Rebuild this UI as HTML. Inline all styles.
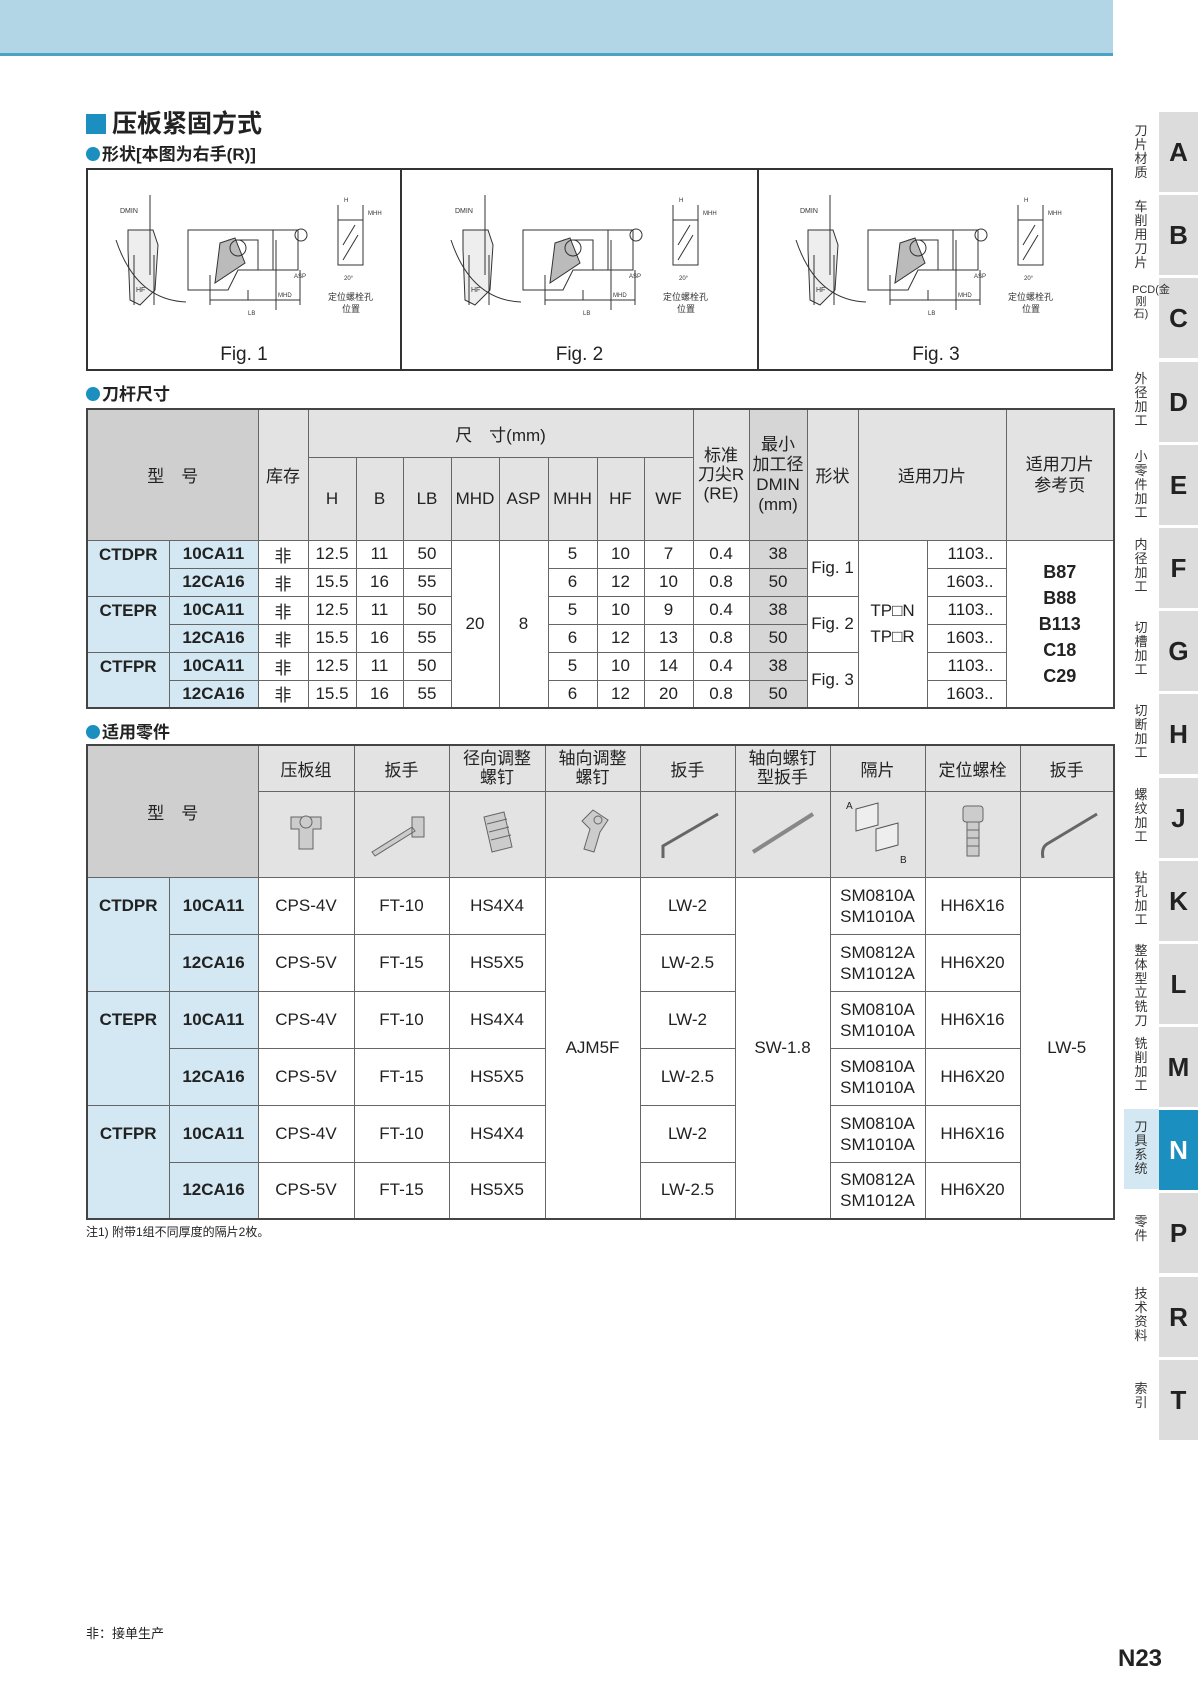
<!DOCTYPE html>
<html><head><meta charset="utf-8">
<style>
*{margin:0;padding:0;box-sizing:border-box}
body{width:1200px;height:1697px;background:#fff;position:relative;overflow:hidden;font-family:"Liberation Sans","Noto Sans CJK SC",sans-serif;color:#222}
.hdr{position:absolute;left:0;top:0;width:1113px;height:56px;background:#b3d6e6;border-bottom:3px solid #4aa3c4}
.title{position:absolute;left:86px;top:104px;font-size:25px;font-weight:bold;color:#222}
.title span{display:inline-block;width:20px;height:20px;background:#1b8fc0;margin-right:6px;vertical-align:-2px}
.sub{position:absolute;left:86px;font-size:17px;font-weight:bold;color:#222}
.sub:before{content:"";display:inline-block;width:14px;height:14px;border-radius:50%;background:#1b8fc0;vertical-align:-1px;margin-right:2px}
.figbox{position:absolute;left:86px;top:168px;width:1027px;height:203px;border:2px solid #333}
.figbox .d{position:absolute;top:0;bottom:0;width:2px;background:#333}
.figlbl{position:absolute;top:174px;font-size:19px;color:#222;text-align:center}
table{border-collapse:collapse;position:absolute;left:86px;table-layout:fixed;border:2px solid #444}
td{border:1px solid #666;text-align:center;font-size:17px;padding:0;overflow:hidden;white-space:nowrap}
.h{background:#e3e3e3}
.hm{background:#cfcfcf}
.m{background:#d3e8f3;font-weight:bold}
.dm{background:#d6d6d6}
.tab{position:absolute;left:1159px;width:39px;height:80px;background:#dcdcdc;font-weight:bold;font-size:26px;color:#222;text-align:center;line-height:80px}
.vt{position:absolute;left:1132px;width:18px;font-size:13px;line-height:14px;color:#333;text-align:center}
</style></head><body>
<div class="hdr"></div>
<div class="title"><span></span>压板紧固方式</div>
<div class="sub" style="top:140px">形状[本图为右手(R)]</div>
<div class="figbox">
<div class="d" style="left:312px"></div><div class="d" style="left:669px"></div>
<svg width="1023" height="199" style="position:absolute;left:0;top:0" stroke="#333" fill="none" stroke-width="1">
<g id="f1" transform="translate(10,10)">
<path d="M30 50 l25 0 l5 15 l-3 45 l-15 15 l-10 -5 l-2 -50z" fill="#eee"/>
<path d="M18 60 q20 60 70 62"/><path d="M52 15 l0 80 M36 75 l0 50 M56 75 l0 50"/>
<text x="22" y="33" font-size="7" fill="#333" stroke="none">DMIN</text>
<text x="38" y="112" font-size="7" fill="#333" stroke="none">HF</text>
<path d="M90 50 h110 v40 h-60 l-10 20 h-40 z M130 60 h30 v30 M175 50 v40"/>
<path d="M122 63 l15 -5 l10 25 l-30 20 z" fill="#bbb"/><circle cx="140" cy="68" r="8"/>
<circle cx="203" cy="55" r="6"/>
<path d="M112 120 h90 M112 95 v30 M202 90 v35 M150 110 v10 M178 60 v70"/>
<text x="150" y="135" font-size="6" fill="#333" stroke="none">LB</text>
<text x="180" y="117" font-size="6" fill="#333" stroke="none">MHD</text>
<text x="196" y="98" font-size="6" fill="#333" stroke="none">ASP</text>
<path d="M240 40 h25 v45 h-25 z M240 25 v15 M265 25 v15 M245 65 l12 -20 M245 80 l15 -25"/>
<text x="246" y="22" font-size="6" fill="#333" stroke="none">H</text>
<text x="270" y="35" font-size="6" fill="#333" stroke="none">MHH</text>
<text x="246" y="100" font-size="6" fill="#333" stroke="none">20°</text>
<text x="230" y="120" font-size="9" fill="#333" stroke="none">定位螺栓孔</text>
<text x="244" y="132" font-size="9" fill="#333" stroke="none">位置</text>
</g>
<use href="#f1" x="335"/><use href="#f1" x="680"/>
</svg>
<div class="figlbl" style="left:0;width:312px">Fig. 1</div>
<div class="figlbl" style="left:314px;width:355px">Fig. 2</div>
<div class="figlbl" style="left:671px;width:354px">Fig. 3</div>
</div>
<div class="sub" style="top:380px">刀杆尺寸</div>

<table style="top:408px;width:1027px">
<colgroup><col style="width:82px"><col style="width:89px"><col style="width:50px"><col style="width:48px"><col style="width:47px"><col style="width:48px"><col style="width:48px"><col style="width:49px"><col style="width:49px"><col style="width:47px"><col style="width:49px"><col style="width:56px"><col style="width:58px"><col style="width:51px"><col style="width:69px"><col style="width:79px"><col style="width:108px"></colgroup>
<tr style="height:48px"><td class="hm" colspan="2" rowspan="2">型　号</td><td class="h" rowspan="2">库存</td><td class="h" colspan="8">尺　寸(mm)</td><td class="h" rowspan="2" style="line-height:19px">标准<br>刀尖R<br>(RE)</td><td class="dm" rowspan="2" style="line-height:20px">最小<br>加工径<br>DMIN<br>(mm)</td><td class="h" rowspan="2">形状</td><td class="h" colspan="2" rowspan="2">适用刀片</td><td class="h" rowspan="2" style="line-height:21px">适用刀片<br>参考页</td></tr>
<tr style="height:83px"><td class="h">H</td><td class="h">B</td><td class="h">LB</td><td class="h">MHD</td><td class="h">ASP</td><td class="h">MHH</td><td class="h">HF</td><td class="h">WF</td></tr>
<tr style="height:28px"><td class="m" rowspan="2" style="vertical-align:top;padding-top:4px;border-bottom-color:#666">CTDPR</td><td class="m">10CA11</td><td>非</td><td>12.5</td><td>11</td><td>50</td><td rowspan="6">20</td><td rowspan="6">8</td><td>5</td><td>10</td><td>7</td><td>0.4</td><td class="dm">38</td><td rowspan="2">Fig. 1</td><td rowspan="6" style="line-height:26px">TP□N<br>TP□R</td><td style="text-align:right;padding-right:12px">1103..</td><td rowspan="6" style="font-weight:bold;font-size:18px;line-height:26px">B87<br>B88<br>B113<br>C18<br>C29</td></tr>
<tr style="height:28px"><td class="m">12CA16</td><td>非</td><td>15.5</td><td>16</td><td>55</td><td>6</td><td>12</td><td>10</td><td>0.8</td><td class="dm">50</td><td style="text-align:right;padding-right:12px">1603..</td></tr>
<tr style="height:28px"><td class="m" rowspan="2" style="vertical-align:top;padding-top:4px">CTEPR</td><td class="m">10CA11</td><td>非</td><td>12.5</td><td>11</td><td>50</td><td>5</td><td>10</td><td>9</td><td>0.4</td><td class="dm">38</td><td rowspan="2">Fig. 2</td><td style="text-align:right;padding-right:12px">1103..</td></tr>
<tr style="height:28px"><td class="m">12CA16</td><td>非</td><td>15.5</td><td>16</td><td>55</td><td>6</td><td>12</td><td>13</td><td>0.8</td><td class="dm">50</td><td style="text-align:right;padding-right:12px">1603..</td></tr>
<tr style="height:28px"><td class="m" rowspan="2" style="vertical-align:top;padding-top:4px">CTFPR</td><td class="m">10CA11</td><td>非</td><td>12.5</td><td>11</td><td>50</td><td>5</td><td>10</td><td>14</td><td>0.4</td><td class="dm">38</td><td rowspan="2">Fig. 3</td><td style="text-align:right;padding-right:12px">1103..</td></tr>
<tr style="height:28px"><td class="m">12CA16</td><td>非</td><td>15.5</td><td>16</td><td>55</td><td>6</td><td>12</td><td>20</td><td>0.8</td><td class="dm">50</td><td style="text-align:right;padding-right:12px">1603..</td></tr>
</table>

<div class="sub" style="top:718px">适用零件</div>
<table style="top:744px;width:1027px">
<colgroup><col style="width:82px"><col style="width:89px"><col style="width:96px"><col style="width:95px"><col style="width:96px"><col style="width:95px"><col style="width:95px"><col style="width:95px"><col style="width:95px"><col style="width:95px"><col style="width:94px"></colgroup>
<tr style="height:46px"><td class="hm" colspan="2" rowspan="2">型　号</td><td class="h">压板组</td><td class="h">扳手</td><td class="h" style="line-height:19px">径向调整<br>螺钉</td><td class="h" style="line-height:19px">轴向调整<br>螺钉</td><td class="h">扳手</td><td class="h" style="line-height:19px">轴向螺钉<br>型扳手</td><td class="h">隔片</td><td class="h">定位螺栓</td><td class="h">扳手</td></tr>
<tr style="height:86px">
<td class="h"><svg width="50" height="60" fill="#ccc" stroke="#666"><path d="M10 15 h30 v12 h-8 v20 h-14 v-20 h-8z"/><circle cx="25" cy="20" r="6"/></svg></td>
<td class="h"><svg width="70" height="60" fill="#ccc" stroke="#666"><path d="M5 50 l40 -25 l3 4 l-40 25z M45 15 h12 v20 h-12z"/></svg></td>
<td class="h"><svg width="50" height="60" fill="#ccc" stroke="#666"><path d="M12 15 l20 -5 l8 35 l-20 5z M15 22 l20 -5 M17 30 l20 -5 M19 38 l20 -5"/></svg></td>
<td class="h"><svg width="50" height="60" fill="#ccc" stroke="#666"><path d="M25 8 l15 10 l-8 12 l-6 20 l-10 -3 l6 -20 l-8 -8z"/><circle cx="30" cy="18" r="4"/></svg></td>
<td class="h"><svg width="80" height="60" fill="none" stroke="#666" stroke-width="3"><path d="M70 12 l-55 32 l0 12"/></svg></td>
<td class="h"><svg width="80" height="60" fill="none" stroke="#888" stroke-width="4"><path d="M10 50 l60 -38"/></svg></td>
<td class="h"><svg width="80" height="70" fill="#eee" stroke="#555"><path d="M18 12 l22 -6 v22 l-22 6z M38 32 l22 -6 v22 l-22 6z"/><text x="8" y="12" font-size="10" fill="#222" stroke="none">A</text><text x="62" y="66" font-size="10" fill="#222" stroke="none">B</text></svg></td>
<td class="h"><svg width="40" height="64" fill="#ccc" stroke="#666"><rect x="10" y="6" width="20" height="16" rx="3"/><path d="M14 22 h12 v34 h-12z M14 30 h12 M14 38 h12 M14 46 h12"/></svg></td>
<td class="h"><svg width="80" height="60" fill="none" stroke="#666" stroke-width="3"><path d="M70 12 l-50 30 q-6 4 -4 14"/></svg></td>
</tr>
<tr style="height:57px"><td class="m" rowspan="2" style="vertical-align:top;padding-top:18px">CTDPR</td><td class="m">10CA11</td><td>CPS-4V</td><td>FT-10</td><td>HS4X4</td><td rowspan="6">AJM5F</td><td>LW-2</td><td rowspan="6">SW-1.8</td><td style="line-height:21px">SM0810A<br>SM1010A</td><td>HH6X16</td><td rowspan="6">LW-5</td></tr>
<tr style="height:57px"><td class="m">12CA16</td><td>CPS-5V</td><td>FT-15</td><td>HS5X5</td><td>LW-2.5</td><td style="line-height:21px">SM0812A<br>SM1012A</td><td>HH6X20</td></tr>
<tr style="height:57px"><td class="m" rowspan="2" style="vertical-align:top;padding-top:18px">CTEPR</td><td class="m">10CA11</td><td>CPS-4V</td><td>FT-10</td><td>HS4X4</td><td>LW-2</td><td style="line-height:21px">SM0810A<br>SM1010A</td><td>HH6X16</td></tr>
<tr style="height:57px"><td class="m">12CA16</td><td>CPS-5V</td><td>FT-15</td><td>HS5X5</td><td>LW-2.5</td><td style="line-height:21px">SM0810A<br>SM1010A</td><td>HH6X20</td></tr>
<tr style="height:57px"><td class="m" rowspan="2" style="vertical-align:top;padding-top:18px">CTFPR</td><td class="m">10CA11</td><td>CPS-4V</td><td>FT-10</td><td>HS4X4</td><td>LW-2</td><td style="line-height:21px">SM0810A<br>SM1010A</td><td>HH6X16</td></tr>
<tr style="height:57px"><td class="m">12CA16</td><td>CPS-5V</td><td>FT-15</td><td>HS5X5</td><td>LW-2.5</td><td style="line-height:21px">SM0812A<br>SM1012A</td><td>HH6X20</td></tr>
</table>
<div style="position:absolute;left:86px;top:1223px;font-size:12px">注1) 附带1组不同厚度的隔片2枚。</div>
<div style="position:absolute;left:86px;top:1623px;font-size:13px">非：接单生产</div>
<div style="position:absolute;left:1118px;top:1645px;font-size:24px;font-weight:bold">N23</div>

<div style="position:absolute;left:1124px;top:1109px;width:35px;height:80px;background:#d3e8f3"></div>
<div class="tab" style="top:112px">A</div><div class="vt" style="top:124px">刀片材质</div>
<div class="tab" style="top:195px">B</div><div class="vt" style="top:200px">车削用刀片</div>
<div class="tab" style="top:278px">C</div><div class="vt" style="top:284px;font-size:11px;line-height:12px">PCD(金刚石)</div>
<div class="tab" style="top:362px">D</div><div class="vt" style="top:372px">外径加工</div>
<div class="tab" style="top:445px">E</div><div class="vt" style="top:450px">小零件加工</div>
<div class="tab" style="top:528px">F</div><div class="vt" style="top:538px">内径加工</div>
<div class="tab" style="top:611px">G</div><div class="vt" style="top:621px">切槽加工</div>
<div class="tab" style="top:694px">H</div><div class="vt" style="top:704px">切断加工</div>
<div class="tab" style="top:778px">J</div><div class="vt" style="top:788px">螺纹加工</div>
<div class="tab" style="top:861px">K</div><div class="vt" style="top:871px">钻孔加工</div>
<div class="tab" style="top:944px">L</div><div class="vt" style="top:944px">整体型立铣刀</div>
<div class="tab" style="top:1027px">M</div><div class="vt" style="top:1037px">铣削加工</div>
<div class="tab" style="top:1110px;background:#1b8fc0;color:#fff">N</div><div class="vt" style="top:1120px">刀具系统</div>
<div class="tab" style="top:1193px">P</div><div class="vt" style="top:1215px">零件</div>
<div class="tab" style="top:1277px">R</div><div class="vt" style="top:1287px">技术资料</div>
<div class="tab" style="top:1360px">T</div><div class="vt" style="top:1382px">索引</div>
</body></html>
